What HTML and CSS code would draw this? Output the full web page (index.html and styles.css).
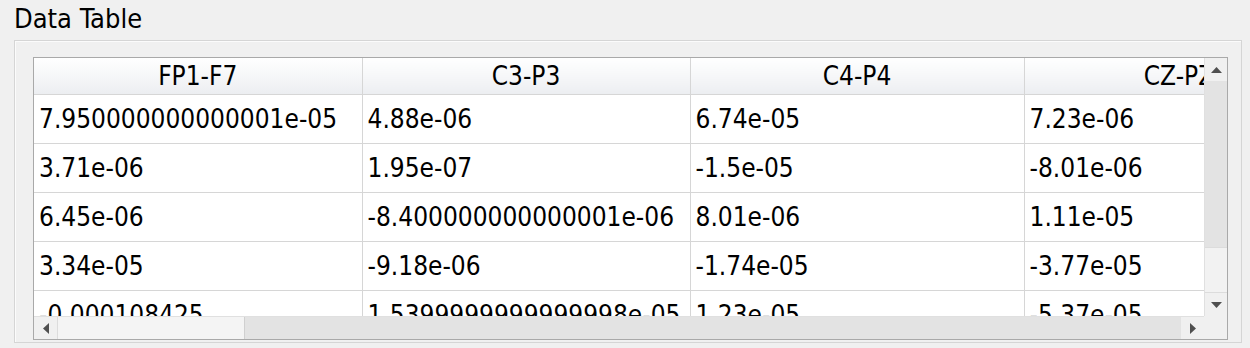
FILE: index.html
```html
<!DOCTYPE html>
<html>
<head>
<meta charset="utf-8">
<link rel="stylesheet" href="styles.css">
</head>
<body>
<div class="title">Data Table</div>
<div class="group">
  <div class="frame">
    <div class="view">
      <table class="grid">
        <colgroup>
          <col class="c1"><col class="c2"><col class="c3"><col class="c4">
        </colgroup>
        <thead>
          <tr><th>FP1-F7</th><th>C3-P3</th><th>C4-P4</th><th>CZ-PZ</th></tr>
        </thead>
        <tbody>
          <tr><td>7.950000000000001e-05</td><td>4.88e-06</td><td>6.74e-05</td><td>7.23e-06</td></tr>
          <tr><td>3.71e-06</td><td>1.95e-07</td><td>-1.5e-05</td><td>-8.01e-06</td></tr>
          <tr><td>6.45e-06</td><td>-8.400000000000001e-06</td><td>8.01e-06</td><td>1.11e-05</td></tr>
          <tr><td>3.34e-05</td><td>-9.18e-06</td><td>-1.74e-05</td><td>-3.77e-05</td></tr>
          <tr><td>-0.000108425</td><td>1.5399999999999998e-05</td><td>1.23e-05</td><td>-5.37e-05</td></tr>
        </tbody>
      </table>
    </div>
    <div class="vbar">
      <div class="btn"><svg width="11" height="6" viewBox="0 0 11 6"><polygon points="0,6 11,6 5.5,0" fill="#4f4f4f"/></svg></div>
      <div class="vtrack"><div class="vthumb"></div></div>
      <div class="btn"><svg width="11" height="6" viewBox="0 0 11 6"><polygon points="0,0 11,0 5.5,6" fill="#4f4f4f"/></svg></div>
    </div>
    <div class="hbar">
      <div class="btn"><svg width="6" height="11" viewBox="0 0 6 11"><polygon points="6,0 6,11 0,5.5" fill="#4f4f4f"/></svg></div>
      <div class="htrack"><div class="hthumb"></div></div>
      <div class="btn"><svg width="6" height="11" viewBox="0 0 6 11"><polygon points="0,0 0,11 6,5.5" fill="#4f4f4f"/></svg></div>
    </div>
    <div class="corner"></div>
  </div>
</div>
</body>
</html>
```

FILE: styles.css
```css
html, body {
  margin: 0;
  padding: 0;
  background: #f0f0f0;
}
body {
  font-family: "DejaVu Sans Condensed", "DejaVu Sans", sans-serif;
  font-stretch: condensed;
  color: #000;
  width: 1250px;
  height: 348px;
  overflow: hidden;
}
.title {
  height: 40px;
  line-height: 38px;
  font-size: 27px;
  padding-left: 14px;
  box-sizing: border-box;
}
.group {
  margin-left: 14px;
  margin-right: 8px;
  height: 303px;
  box-sizing: border-box;
  border: 1px solid #d5d5d5;
  box-shadow: inset 1px 1px 0 #fbfbfb;
  padding: 16px 0 0 18px;
}
.frame {
  width: 1195px;
  height: 283px;
  box-sizing: border-box;
  border: 1px solid #a9a9a9;
  display: grid;
  grid-template-columns: 1fr 23px;
  grid-template-rows: 1fr 23px;
  background: #fff;
}
.view {
  overflow: hidden;
  background: #fff;
}
.grid {
  border-collapse: collapse;
  table-layout: fixed;
  width: 1300px;
  font-size: 26px;
}
.c1 { width: 328px; }
.c2 { width: 328px; }
.c3 { width: 334px; }
.c4 { width: 310px; }
.grid th {
  height: 36px;
  padding: 0;
  font-weight: normal;
  text-align: center;
  background: linear-gradient(#ffffff, #f4f5f7 60%, #eceef1);
  border-right: 1px solid #d6d6d6;
  border-bottom: 1px solid #d6d6d6;
  white-space: nowrap;
  overflow: hidden;
}
.grid td {
  height: 48px;
  padding: 0 0 0 5px;
  border-right: 1px solid #d6d6d6;
  border-bottom: 1px solid #d6d6d6;
  white-space: nowrap;
  overflow: hidden;
  vertical-align: middle;
}
.vbar {
  display: flex;
  flex-direction: column;
  background: #e6e6e6;
  border-left: 1px solid #e0e0e0;
}
.hbar {
  display: flex;
  flex-direction: row;
  background: #e6e6e6;
  border-top: 1px solid #e0e0e0;
}
.btn {
  flex: 0 0 23px;
  display: flex;
  align-items: center;
  justify-content: center;
  background: #f0f0f0;
}
.vtrack {
  flex: 1;
  display: flex;
  flex-direction: column;
  padding-top: 166px;
  background: #e3e3e3;
}
.vthumb {
  height: 46px;
  background: #f2f2f2;
  border-top: 1px solid #dcdcdc;
  border-bottom: 1px solid #dcdcdc;
  box-sizing: border-box;
}
.htrack {
  flex: 1;
  display: flex;
  background: #e3e3e3;
}
.hthumb {
  width: 188px;
  background: #f4f4f4;
  border-left: 1px solid #dcdcdc;
  border-right: 1px solid #d0d0d0;
  box-sizing: border-box;
}
.corner {
  background: #f0f0f0;
}
```
